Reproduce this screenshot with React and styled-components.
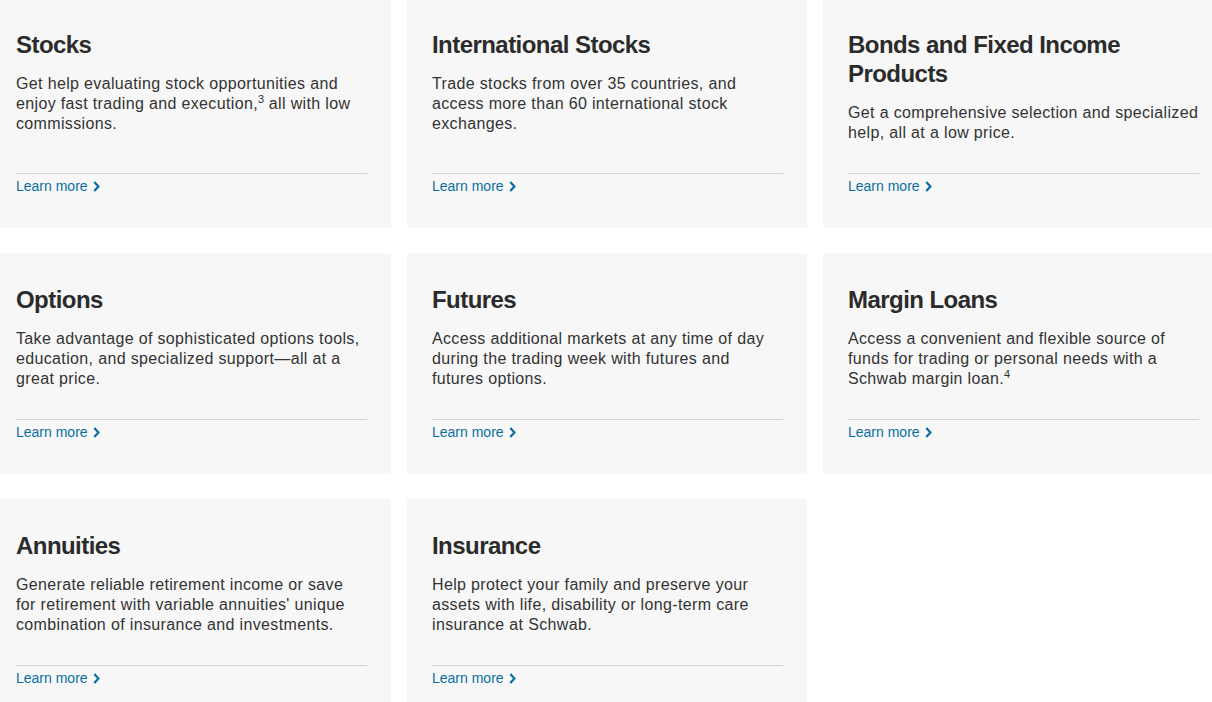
import React from 'react';
import styled, { createGlobalStyle } from 'styled-components';

const GlobalStyle = createGlobalStyle`
  html, body {
    margin: 0;
    padding: 0;
    background: #ffffff;
    overflow: hidden;
  }
  body {
    font-family: "Liberation Sans", Arial, sans-serif;
    color: #333333;
  }
`;

const products = [
    {
        title: 'Stocks',
        text: 'Get help evaluating stock opportunities and enjoy fast trading and execution,',
        note: '3',
        rest: ' all with low commissions.'
    },
    {
        title: 'International Stocks',
        text: 'Trade stocks from over 35 countries, and access more than 60 international stock exchanges.'
    },
    {
        title: 'Bonds and Fixed Income Products',
        text: 'Get a comprehensive selection and specialized help, all at a low price.'
    },
    {
        title: 'Options',
        text: 'Take advantage of sophisticated options tools, education, and specialized support\u2014all at a great price.'
    },
    {
        title: 'Futures',
        text: 'Access additional markets at any time of day during the trading week with futures and futures options.'
    },
    {
        title: 'Margin Loans',
        text: 'Access a convenient and flexible source of funds for trading or personal needs with a Schwab margin loan.',
        note: '4'
    },
    {
        title: 'Annuities',
        text: "Generate reliable retirement income or save for retirement with variable annuities' unique combination of insurance and investments."
    },
    {
        title: 'Insurance',
        text: 'Help protect your family and preserve your assets with life, disability or long-term care insurance at Schwab.'
    }
];

const Grid = styled.div`
  display: grid;
  grid-template-columns: repeat(3, 400px);
  column-gap: 16px;
  row-gap: 25px;
  margin: -2px 0 0 -9px;
`;

const Card = styled.div`
  display: flex;
  flex-direction: column;
  background: #f7f7f7;
  padding: 32px 24px 32px 25px;
`;

const Title = styled.h3`
  margin: 0 0 15px;
  font-size: 24px;
  line-height: 29px;
  font-weight: 700;
  color: #2b2b2b;
  letter-spacing: -0.55px;
`;

const Text = styled.p`
  margin: 0 0 30px;
  font-size: 16px;
  line-height: 20px;
  letter-spacing: 0.35px;
  color: #333333;

  sup {
    font-size: 11px;
    line-height: 0;
    vertical-align: 6px;
    letter-spacing: 0;
  }
`;

const Footer = styled.div`
  margin-top: auto;
  border-top: 1px solid #d6d6d6;
  padding-top: 2px;
`;

const LearnMore = styled.a`
  display: inline-flex;
  align-items: center;
  gap: 5px;
  font-size: 14px;
  line-height: 20px;
  color: #0a6fa0;
  text-decoration: none;
`;

function Chevron() {
    return (
        <svg width="7" height="11" viewBox="0 0 7 11">
            <path d="M1.3 1 L5.4 5.5 L1.3 10" fill="none" stroke="#0a6fa0" strokeWidth="2.2" />
        </svg>
    );
}

function ProductCard(props) {
    return (
        <Card>
            <Title>{props.title}</Title>
            <Text>
                {props.text}
                {props.note ? <sup>{props.note}</sup> : null}
                {props.rest}
            </Text>
            <Footer>
                <LearnMore href="#">
                    Learn more <Chevron />
                </LearnMore>
            </Footer>
        </Card>
    );
}

export default function App() {
    return (
        <>
            <GlobalStyle />
            <Grid>
                {products.map((p, i) => (
                    <ProductCard key={i} {...p} />
                ))}
            </Grid>
        </>
    );
}
